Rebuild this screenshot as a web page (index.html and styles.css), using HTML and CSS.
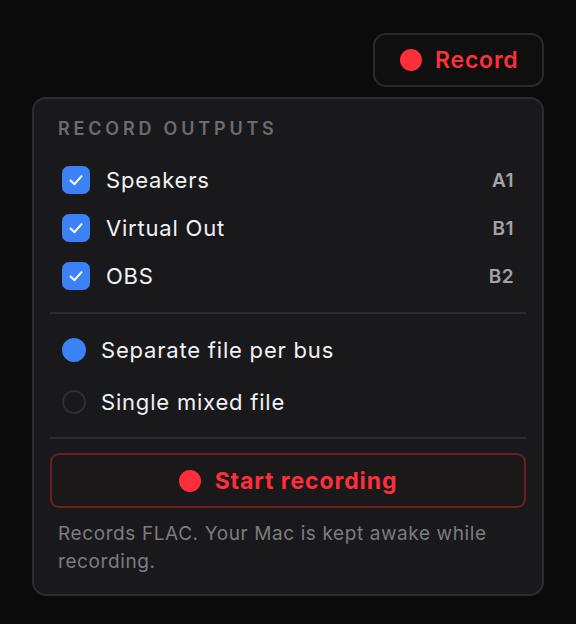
FILE: index.html
```html
<!DOCTYPE html>
<html>
<head>
<meta charset="utf-8">
<link rel="stylesheet" href="styles.css">
</head>
<body>
<div class="wrap">
  <button class="rec-btn"><span class="dot"></span><span>Record</span></button>
  <div class="panel">
    <div class="heading">RECORD OUTPUTS</div>
    <div class="outputs">
      <div class="row">
        <span class="check"><svg width="28" height="28" viewBox="0 0 28 28"><path d="M8.5 14.5 L12.5 18.2 L19.5 10.2" fill="none" stroke="#fff" stroke-width="2" stroke-linecap="round" stroke-linejoin="round"/></svg></span>
        <span class="label">Speakers</span><span class="bus">A1</span>
      </div>
      <div class="row">
        <span class="check"><svg width="28" height="28" viewBox="0 0 28 28"><path d="M8.5 14.5 L12.5 18.2 L19.5 10.2" fill="none" stroke="#fff" stroke-width="2" stroke-linecap="round" stroke-linejoin="round"/></svg></span>
        <span class="label">Virtual Out</span><span class="bus">B1</span>
      </div>
      <div class="row">
        <span class="check"><svg width="28" height="28" viewBox="0 0 28 28"><path d="M8.5 14.5 L12.5 18.2 L19.5 10.2" fill="none" stroke="#fff" stroke-width="2" stroke-linecap="round" stroke-linejoin="round"/></svg></span>
        <span class="label">OBS</span><span class="bus">B2</span>
      </div>
    </div>
    <div class="divider div1"></div>
    <div class="modes">
      <div class="radio-row"><span class="radio on"></span><span class="label">Separate file per bus</span></div>
      <div class="radio-row"><span class="radio"></span><span class="label">Single mixed file</span></div>
    </div>
    <div class="divider div2"></div>
    <button class="start-btn"><span class="dot"></span><span>Start recording</span></button>
    <p class="note">Records FLAC. Your Mac is kept awake while recording.</p>
  </div>
</div>
</body>
</html>
```
FILE: styles.css
```css
* { box-sizing: border-box; }
html, body { margin: 0; padding: 0; background: #0b0b0c; }
body {
  font-family: Inter, "Noto Sans", sans-serif;
  width: 576px;
  height: 624px;
  overflow: hidden;
}
.wrap {
  display: flex;
  flex-direction: column;
  align-items: flex-end;
  padding: 33px 32px 0 32px;
}
.rec-btn {
  display: flex;
  align-items: center;
  gap: 13px;
  height: 54px;
  width: 171px;
  padding: 0 0 0 25px;
  background: #0f0f10;
  border: 2px solid #2a2a2c;
  border-radius: 13px;
  color: #ff2e3b;
  font-family: inherit;
  font-size: 23px;
  font-weight: 600;
  letter-spacing: 0.8px;
}
.dot {
  width: 22px;
  height: 22px;
  border-radius: 50%;
  background: #ff2e3b;
  flex: none;
}
.panel {
  margin-top: 10px;
  width: 512px;
  background: #19191b;
  border: 2px solid #2c2c2e;
  border-radius: 14px;
  padding: 17px 16px 18px;
}
.heading {
  height: 26px;
  line-height: 26px;
  margin-left: 8px;
  font-size: 18px;
  font-weight: 600;
  letter-spacing: 3.8px;
  color: #6c6c70;
}
.outputs { margin-top: 14px; }
.row {
  display: flex;
  align-items: center;
  height: 48px;
  padding: 0 12px 0 12px;
}
.check {
  width: 28px;
  height: 28px;
  border-radius: 7px;
  background: #3b82f6;
  flex: none;
  display: flex;
}
.label {
  color: #f2f2f4;
  font-size: 22px;
  letter-spacing: 0.8px;
}
.row .label { margin-left: 16px; flex: 1; }
.bus {
  color: #a3a3a7;
  font-size: 19px;
  font-weight: 600;
  letter-spacing: 0.5px;
}
.divider {
  height: 2px;
  background: #2c2c2e;
}
.div1 { margin-top: 12px; }
.modes { margin-top: 10px; }
.radio-row {
  display: flex;
  align-items: center;
  height: 52px;
  padding-left: 12px;
}
.radio {
  width: 24px;
  height: 24px;
  border-radius: 50%;
  border: 2px solid #2e2e31;
  flex: none;
}
.radio.on { background: #3b82f6; border-color: #3b82f6; }
.radio-row .label { margin-left: 15px; }
.div2 { margin-top: 9px; }
.start-btn {
  margin-top: 14px;
  width: 100%;
  height: 55px;
  display: flex;
  align-items: center;
  justify-content: center;
  gap: 14px;
  background: #1b1819;
  border: 2px solid #6a1e25;
  border-radius: 9px;
  color: #ff2e3b;
  font-family: inherit;
  font-size: 23px;
  font-weight: 700;
  letter-spacing: 0.9px;
}
.note {
  margin: 12px 0 0 8px;
  font-size: 19px;
  line-height: 28px;
  color: #7c7c80;
  letter-spacing: 0.6px;
}
```
